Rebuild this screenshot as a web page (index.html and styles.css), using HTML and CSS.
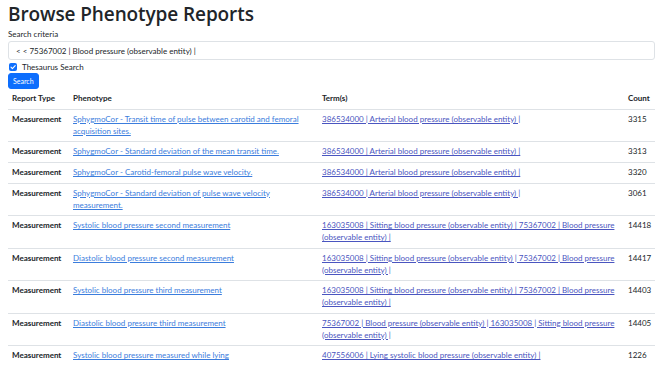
FILE: index.html
```html
<!DOCTYPE html>
<html lang="en">
<head>
    <meta charset="UTF-8">
    <meta name="viewport" content="width=device-width, initial-scale=1.0">
    <title>Browse Phenotype Reports</title>
    <link rel="stylesheet" href="styles.css">
</head>
<body>

    <div class="container">
        <h1>Browse Phenotype Reports</h1>

        <label class="form-label" for="criteria">Search criteria</label>
        <input class="form-control" id="criteria" type="text" value="< < 75367002 | Blood pressure (observable entity) |">

        <div class="form-check">
            <span class="check-box">
                <svg viewBox="0 0 8 8" width="8" height="8"><path d="M2 4.2l1.4 1.4L6.2 2.6" fill="none" stroke="#fff" stroke-width="1.1" stroke-linecap="round" stroke-linejoin="round"/></svg>
            </span>
            <span>Thesaurus Search</span>
        </div>

        <button class="btn">Search</button>

        <table class="table">
            <colgroup>
                <col class="col-type">
                <col class="col-pheno">
                <col class="col-terms">
                <col class="col-count">
            </colgroup>
            <thead>
                <tr>
                    <th>Report Type</th>
                    <th>Phenotype</th>
                    <th>Term(s)</th>
                    <th>Count</th>
                </tr>
            </thead>
            <tbody>
                <tr>
                    <th>Measurement</th>
                    <td><a class="pheno" href="#">SphygmoCor - Transit time of pulse between carotid and femoral acquisition sites.</a></td>
                    <td><a class="term" href="#">386534000 | Arterial blood pressure (observable entity) |</a></td>
                    <td>3315</td>
                </tr>
                <tr>
                    <th>Measurement</th>
                    <td><a class="pheno" href="#">SphygmoCor - Standard deviation of the mean transit time.</a></td>
                    <td><a class="term" href="#">386534000 | Arterial blood pressure (observable entity) |</a></td>
                    <td>3313</td>
                </tr>
                <tr>
                    <th>Measurement</th>
                    <td><a class="pheno" href="#">SphygmoCor - Carotid-femoral pulse wave velocity.</a></td>
                    <td><a class="term" href="#">386534000 | Arterial blood pressure (observable entity) |</a></td>
                    <td>3320</td>
                </tr>
                <tr>
                    <th>Measurement</th>
                    <td><a class="pheno" href="#">SphygmoCor - Standard deviation of pulse wave velocity measurement.</a></td>
                    <td><a class="term" href="#">386534000 | Arterial blood pressure (observable entity) |</a></td>
                    <td>3061</td>
                </tr>
                <tr>
                    <th>Measurement</th>
                    <td><a class="pheno" href="#">Systolic blood pressure second measurement</a></td>
                    <td><a class="term" href="#">163035008 | Sitting blood pressure (observable entity) | 75367002 | Blood pressure (observable entity) |</a></td>
                    <td>14418</td>
                </tr>
                <tr>
                    <th>Measurement</th>
                    <td><a class="pheno" href="#">Diastolic blood pressure second measurement</a></td>
                    <td><a class="term" href="#">163035008 | Sitting blood pressure (observable entity) | 75367002 | Blood pressure (observable entity) |</a></td>
                    <td>14417</td>
                </tr>
                <tr>
                    <th>Measurement</th>
                    <td><a class="pheno" href="#">Systolic blood pressure third measurement</a></td>
                    <td><a class="term" href="#">163035008 | Sitting blood pressure (observable entity) | 75367002 | Blood pressure (observable entity) |</a></td>
                    <td>14403</td>
                </tr>
                <tr>
                    <th>Measurement</th>
                    <td><a class="pheno" href="#">Diastolic blood pressure third measurement</a></td>
                    <td><a class="term" href="#">75367002 | Blood pressure (observable entity) | 163035008 | Sitting blood pressure (observable entity) |</a></td>
                    <td>14405</td>
                </tr>
                <tr>
                    <th>Measurement</th>
                    <td><a class="pheno" href="#">Systolic blood pressure measured while lying</a></td>
                    <td><a class="term" href="#">407556006 | Lying systolic blood pressure (observable entity) |</a></td>
                    <td>1226</td>
                </tr>
            </tbody>
        </table>
    </div>

</body>
</html>
```

FILE: styles.css
```css
body {
    margin: 0;
    font-family: 'Lato', 'Noto Sans', sans-serif;
    font-size: 8px;
    line-height: 12px;
    color: #212529;
    background: #fff;
}
.container {
    padding: 0 8px;
}
h1 {
    margin: 0;
    padding-top: 1px;
    font-family: 'Open Sans', 'Lato', sans-serif;
    font-size: 19px;
    font-weight: 600;
    line-height: 27px;
    letter-spacing: -0.1px;
    color: #212529;
}
.form-label {
    display: block;
    line-height: 12px;
}
.form-control {
    display: block;
    box-sizing: border-box;
    width: 100%;
    height: 19px;
    margin-top: 1px;
    padding: 0 7px;
    border: 1px solid #dee2e6;
    border-radius: 3px;
    font-family: inherit;
    font-size: 8px;
    color: #212529;
}
.form-check {
    display: flex;
    align-items: center;
    gap: 5px;
    height: 13px;
    padding-left: 1px;
}
.check-box {
    display: flex;
    width: 8px;
    height: 8px;
    border-radius: 2px;
    background: #0d6efd;
}
.btn {
    display: block;
    height: 16px;
    padding: 0 4px;
    border: 1px solid #0d6efd;
    border-radius: 3px;
    background: #0d6efd;
    color: #fff;
    font-family: inherit;
    font-size: 7px;
    cursor: pointer;
}
.table {
    width: 100%;
    border-collapse: collapse;
    table-layout: fixed;
}
.col-type {
    width: 61px;
}
.col-pheno {
    width: 249px;
}
.col-count {
    width: 31px;
}
.table th,
.table td {
    padding: 4px 4px;
    line-height: 11.75px;
    text-align: left;
    vertical-align: top;
    border-bottom: 1px solid #dee2e6;
}
.table thead th {
    vertical-align: bottom;
}
.table th {
    font-weight: 700;
}
.table td a {
    text-decoration: underline;
}
.pheno {
    color: #3b7ddd;
}
.term {
    color: #4a55c0;
}
```
